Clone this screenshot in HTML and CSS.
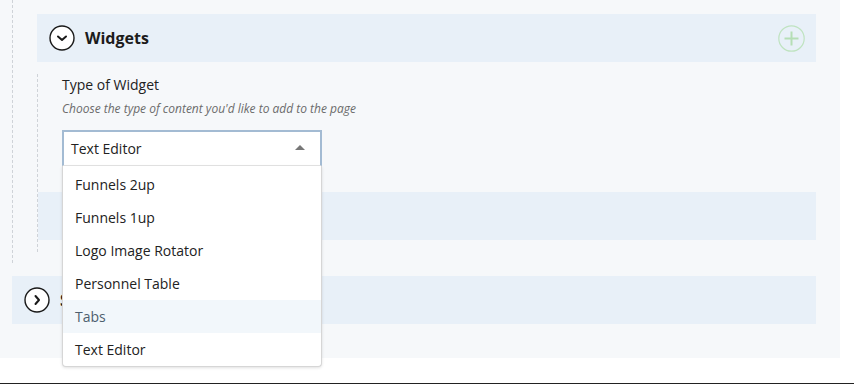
FILE: index.html
```html
<!DOCTYPE html>
<html lang="en">
<head>
  <meta charset="UTF-8" />
  <meta name="viewport" content="width=device-width, initial-scale=1.0"/>
  <title>Widgets</title>
  <link rel="stylesheet" href="styles.css">
</head>
<body>
  <div class="page">
    <div class="tree">
      <div class="section-head">
        <span class="toggle">
          <svg width="26" height="26" viewBox="0 0 26 26"><circle cx="13" cy="13" r="12" fill="#fff" stroke="#1a1a1a" stroke-width="1.4"/><path d="M9 11.5 L13 15 L17 11.5" fill="none" stroke="#1a1a1a" stroke-width="2" stroke-linecap="round" stroke-linejoin="round"/></svg>
        </span>
        <span class="section-title">Widgets</span>
        <span class="add">
          <svg width="27" height="27" viewBox="0 0 27 27"><circle cx="13.5" cy="13.5" r="12.7" fill="none" stroke="#bfe3c0" stroke-width="1.2"/><path d="M13.5 6.5 V20.5 M6.5 13.5 H20.5" stroke="#b5deb6" stroke-width="2"/></svg>
        </span>
      </div>

      <div class="widget-body">
        <div class="field-label">Type of Widget</div>
        <div class="field-help">Choose the type of content you'd like to add to the page</div>

        <div class="select">
          <div class="select-value">
            <span>Text Editor</span>
            <span class="caret"></span>
          </div>
          <ul class="options">
            <li>Funnels 2up</li>
            <li>Funnels 1up</li>
            <li>Logo Image Rotator</li>
            <li>Personnel Table</li>
            <li class="hover">Tabs</li>
            <li>Text Editor</li>
          </ul>
        </div>

        <div class="child-block"></div>
      </div>
    </div>

    <div class="section-head outer">
      <span class="toggle">
        <svg width="26" height="26" viewBox="0 0 26 26"><circle cx="13" cy="13" r="12" fill="#fff" stroke="#1a1a1a" stroke-width="1.4"/><path d="M11.5 9 L15 13 L11.5 17" fill="none" stroke="#1a1a1a" stroke-width="2" stroke-linecap="round" stroke-linejoin="round"/></svg>
      </span>
      <span class="section-title">Settings</span>
    </div>
  </div>
  <div class="rule"></div>
</body>
</html>
```

FILE: styles.css
```css
body {
  margin: 0;
  background: #fff;
  font-family: "Open Sans", "Liberation Sans", sans-serif;
  color: #222;
}
.page {
  width: 840px;
  height: 358px;
  background: #f6f8fa;
}
.tree {
  margin-left: 12px;
  border-left: 1px dashed #cfd3d8;
  padding: 14px 24px 11px 24px;
}
.section-head {
  display: flex;
  align-items: center;
  height: 48px;
  background: #e8f0f8;
  padding-left: 12px;
}
.section-head.outer {
  margin: 13px 24px 0 12px;
}
.toggle {
  display: flex;
  width: 26px;
  height: 26px;
}
.section-title {
  margin-left: 10px;
  font-size: 16px;
  font-weight: 700;
  color: #1c1c1c;
}
.add {
  display: flex;
  margin-left: auto;
  margin-right: 11px;
}
.widget-body {
  margin-top: 12px;
  border-left: 1px dashed #cfd3d8;
  padding: 0 0 12px 24px;
}
.field-label {
  font-size: 14px;
  line-height: 22px;
  color: #222;
}
.field-help {
  margin-top: 5px;
  font-size: 12px;
  font-style: italic;
  line-height: 16px;
  color: #6b6b6b;
}
.select {
  position: relative;
  width: 260px;
  margin-top: 13px;
}
.select-value {
  display: flex;
  align-items: center;
  justify-content: space-between;
  height: 33px;
  padding: 0 15px 0 7px;
  background: #fff;
  border: 2px solid #a3bbd3;
  border-bottom: 1px solid #e4e4e4;
  font-size: 14px;
  color: #222;
}
.caret {
  width: 0;
  height: 0;
  border-left: 5px solid transparent;
  border-right: 5px solid transparent;
  border-bottom: 5px solid #777;
  margin-bottom: 3px;
}
.options {
  position: absolute;
  top: 36px;
  left: 0;
  z-index: 2;
  width: 260px;
  box-sizing: border-box;
  margin: 0;
  padding: 2px 0 0;
  list-style: none;
  background: #fff;
  border: 1px solid #d6d6d6;
  border-top: none;
  border-radius: 0 0 4px 4px;
  box-shadow: 0 1px 3px rgba(0, 0, 0, 0.12);
}
.options li {
  height: 33px;
  line-height: 33px;
  padding-left: 12px;
  font-size: 14px;
  color: #222;
}
.options li.hover {
  background: #f2f7fb;
  color: #4d5e6e;
}
.child-block {
  height: 48px;
  margin: 26px 0 0 -24px;
  background: #e8f0f8;
}
.rule {
  height: 1px;
  margin-top: 25px;
  background: #222;
}
```
